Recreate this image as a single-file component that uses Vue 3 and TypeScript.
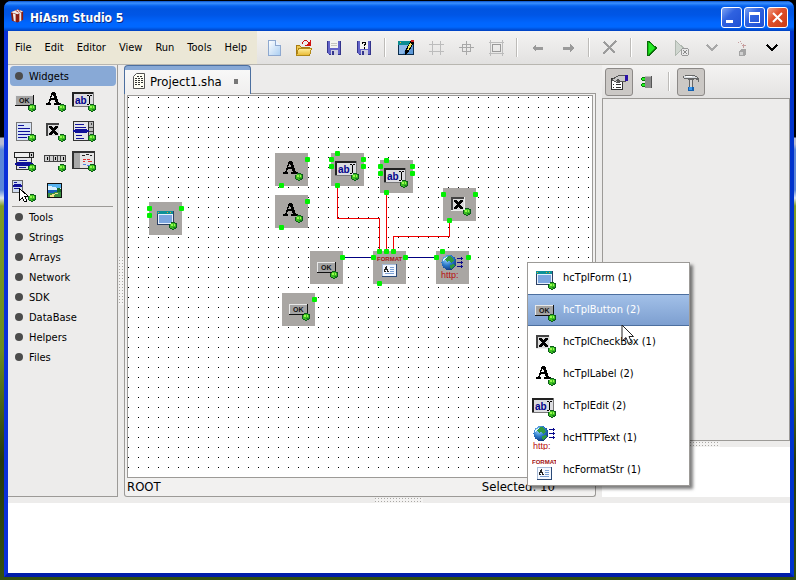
<script setup lang="ts">
type Port = [number, number]
interface FlowNode { id: string; icon: string; x: number; y: number; ports: Port[] }
interface Caption { text: string; x: number; y: number; kind: string }

const menus: string[] = ['File', 'Edit', 'Editor', 'View', 'Run', 'Tools', 'Help']

const toolbar: { icon: string; label: string }[][] = [
  [
    { icon: 't-new', label: 'New' },
    { icon: 't-open', label: 'Open' },
    { icon: 't-save', label: 'Save' },
    { icon: 't-saveas', label: 'Save as' },
  ],
  [
    { icon: 't-form', label: 'Edit form' },
    { icon: 't-grid', label: 'Grid' },
    { icon: 't-center', label: 'Center' },
    { icon: 't-bounds', label: 'Bounds' },
  ],
  [
    { icon: 't-left', label: 'Back' },
    { icon: 't-right', label: 'Forward' },
  ],
  [{ icon: 't-delete', label: 'Delete' }],
  [
    { icon: 't-run', label: 'Run' },
    { icon: 't-debug', label: 'Debug' },
    { icon: 't-chev-off', label: 'Debug options' },
    { icon: 't-build', label: 'Build' },
    { icon: 't-chev', label: 'More' },
  ],
]

const widgets: { icon: string; label: string }[] = [
  { icon: 'w-button', label: 'Button' },
  { icon: 'w-label', label: 'Label' },
  { icon: 'w-edit', label: 'Edit' },
  { icon: 'w-memo', label: 'Memo' },
  { icon: 'w-check', label: 'Check box' },
  { icon: 'w-list', label: 'List box' },
  { icon: 'w-combo', label: 'Combo box' },
  { icon: 'w-track', label: 'Track bar' },
  { icon: 'w-rich', label: 'Text view' },
  { icon: 'w-popup', label: 'Popup menu' },
  { icon: 'w-image', label: 'Image' },
]

// Lettering drawn on top of a 24x24 widget icon
const captions: Record<string, Caption> = {
  'w-button': { text: 'OK', x: 7, y: 15, kind: 'ok' },
  'w-edit': { text: 'ab', x: 3, y: 16, kind: 'ab' },
  'w-http': { text: 'http:', x: 1, y: 23, kind: 'http' },
  'w-format': { text: 'FORMAT', x: 0, y: 6, kind: 'format' },
}

const categories: string[] = ['Tools', 'Strings', 'Arrays', 'Network', 'SDK', 'DataBase', 'Helpers', 'Files']

const nodes: FlowNode[] = [
  { id: 'form', icon: 'w-form', x: 21, y: 106, ports: [[0, 6], [0, 13], [32, 6]] },
  { id: 'label1', icon: 'w-label', x: 147, y: 57, ports: [[32, 6], [6, 32]] },
  { id: 'label2', icon: 'w-label', x: 147, y: 99, ports: [[32, 6], [6, 32]] },
  { id: 'edit1', icon: 'w-edit', x: 203, y: 57, ports: [[6, 0], [0, 6], [0, 13], [32, 6], [32, 13], [6, 32]] },
  { id: 'edit2', icon: 'w-edit', x: 252, y: 64, ports: [[6, 0], [0, 6], [0, 13], [32, 6], [32, 13], [6, 32]] },
  { id: 'check', icon: 'w-check', x: 315, y: 92, ports: [[0, 6], [32, 6], [6, 32]] },
  { id: 'button1', icon: 'w-button', x: 182, y: 155, ports: [[32, 6]] },
  { id: 'button2', icon: 'w-button', x: 154, y: 197, ports: [[32, 6]] },
  { id: 'format', icon: 'w-format', x: 245, y: 155, ports: [[6, 0], [13, 0], [20, 0], [0, 6], [32, 6], [6, 32]] },
  { id: 'http', icon: 'w-http', x: 308, y: 155, ports: [[6, 0], [0, 6], [32, 6]] },
]

const dataWires: string[] = ['M209 90V122H251V153', 'M258 97V153', 'M321 125V140H265V153']
const eventWires: string[] = ['M215 161H244', 'M278 161H307']

const found: { icon: string; name: string; count: number }[] = [
  { icon: 'w-form', name: 'hcTplForm', count: 1 },
  { icon: 'w-button', name: 'hcTplButton', count: 2 },
  { icon: 'w-check', name: 'hcTplCheckBox', count: 1 },
  { icon: 'w-label', name: 'hcTplLabel', count: 2 },
  { icon: 'w-edit', name: 'hcTplEdit', count: 2 },
  { icon: 'w-http', name: 'hcHTTPText', count: 1 },
  { icon: 'w-format', name: 'hcFormatStr', count: 1 },
]
const active = 'hcTplButton'
</script>

<template>
  <div class="desktop">
    <svg class="defs" aria-hidden="true">
      <defs>
        <linearGradient id="g-sheet" x1="0" y1="0" x2="1" y2="1">
          <stop offset="0" stop-color="#fff" /><stop offset="1" stop-color="#a9cdf2" />
        </linearGradient>
        <linearGradient id="g-glass" x1="0" y1="0" x2="1" y2="1">
          <stop offset="0" stop-color="#b4cdf0" /><stop offset="1" stop-color="#5c8cd0" />
        </linearGradient>
        <linearGradient id="g-folder" x1="0" y1="0" x2="0" y2="1">
          <stop offset="0" stop-color="#fff0a0" /><stop offset="1" stop-color="#e8b830" />
        </linearGradient>
        <radialGradient id="g-globe" cx=".35" cy=".3" r=".8">
          <stop offset="0" stop-color="#9fd8ff" /><stop offset=".5" stop-color="#2a78c8" /><stop offset="1" stop-color="#0a2a70" />
        </radialGradient>
        <pattern id="dots" width="10" height="10" patternUnits="userSpaceOnUse">
          <rect x="0" y="1" width="1" height="1" fill="#000" />
        </pattern>
      </defs>

      <symbol id="bullet" viewBox="0 0 8 8">
        <path d="M2 0H6V1H8V6H7V7H5V8H3V7H1V6H0V2H2Z" fill="#0c5a1c" />
        <path d="M2 1H6V2H7V5H5V7H3V6H1V2H2Z" fill="#3cc020" />
        <path d="M2 2H4V4H2ZM5 2H6V4H5Z" fill="#98f850" />
        <path d="M4 5H7V6H4Z" fill="#1c8420" />
      </symbol>

      <symbol id="w-form" viewBox="0 0 24 24">
        <rect x="4" y="5" width="17" height="14" fill="#2b3f63" />
        <rect x="4" y="5" width="16" height="3" fill="#0c9098" />
        <path d="M5 6.500H6M14 6.500H15M17 6.500H18" stroke="#d8b020" />
        <rect x="5" y="8" width="15" height="10" fill="#e8f0fc" />
        <rect x="6" y="9" width="13" height="8" fill="#7ca6e0" />
        <use href="#bullet" x="16" y="16" width="8" height="8" />
      </symbol>
      <symbol id="w-button" viewBox="0 0 24 24">
        <rect x="3" y="7" width="19" height="11" fill="#111" />
        <rect x="3" y="7" width="18" height="10" fill="#e8e8e8" />
        <rect x="4" y="8" width="17" height="9" fill="#a4a4a4" />
        <use href="#bullet" x="16" y="16" width="8" height="8" />
      </symbol>
      <symbol id="w-label" viewBox="0 0 24 24">
        <path d="M10 4H13L17 15H19V17H12V15H14L13 12H9L8 15H9V17H4V15H6ZM9 10H12L11 6Z" fill="#000" fill-rule="evenodd" />
        <use href="#bullet" x="16" y="16" width="8" height="8" />
      </symbol>
      <symbol id="w-edit" viewBox="0 0 24 24">
        <rect x="0" y="4" width="22" height="15" fill="#777" />
        <rect x="0" y="4" width="21" height="14" fill="#222" />
        <rect x="2" y="6" width="19" height="12" fill="#dcdce0" />
        <path d="M15 7.500H17M18 7.500H20M17.500 8V16M15 16.500H17M18 16.500H20" stroke="#000" fill="none" />
        <use href="#bullet" x="16" y="16" width="8" height="8" />
      </symbol>
      <symbol id="w-memo" viewBox="0 0 24 24">
        <rect x="4" y="4" width="16" height="19" fill="#777" />
        <rect x="5" y="5" width="14" height="17" fill="#d8e4f6" />
        <path d="M6 7.500H12M6 10.500H18M6 13.500H18M6 16.500H18M6 19.500H15" stroke="#10109a" />
        <use href="#bullet" x="16" y="16" width="8" height="8" />
      </symbol>
      <symbol id="w-check" viewBox="0 0 24 24">
        <rect x="4" y="5" width="14" height="14" fill="#eee" />
        <rect x="4" y="5" width="13" height="13" fill="#444" />
        <rect x="6" y="7" width="11" height="11" fill="#dcdcdc" />
        <path d="M7 8H10V9H11V10H12V9H13V8H16V10H15V11H14V12H13V13H14V14H15V15H16V17H13V16H12V15H11V16H10V17H7V15H8V14H9V13H10V12H9V11H8V10H7Z" fill="#000" />
        <use href="#bullet" x="16" y="16" width="8" height="8" />
      </symbol>
      <symbol id="w-list" viewBox="0 0 24 24">
        <rect x="1" y="3" width="21" height="20" fill="#333" />
        <rect x="2" y="4" width="14" height="18" fill="#e4e4e8" />
        <rect x="17" y="4" width="4" height="18" fill="#bbb" />
        <path d="M19 5V7M17 9.500H21M17 13.500H21M17 17.500H21" stroke="#444" />
        <path d="M3 6.500H12M3 9.500H14M4 17.500H10M4 20.500H12" stroke="#10109a" />
        <path d="M3 11H15V12H17V14H15V15H3V14H1V12H3Z" fill="#10109a" />
        <use href="#bullet" x="16" y="16" width="8" height="8" />
      </symbol>
      <symbol id="w-combo" viewBox="0 0 24 24">
        <rect x="2" y="4" width="20" height="6" fill="#222" />
        <rect x="3" y="5" width="14" height="4" fill="#eee" />
        <rect x="18" y="5" width="3" height="4" fill="#ccc" />
        <rect x="19" y="6" width="1" height="2" fill="#000" />
        <rect x="4" y="10" width="16" height="12" fill="#333" />
        <rect x="5" y="10" width="14" height="11" fill="#e4e4e8" />
        <path d="M7 12.500H15M7 19.500H14" stroke="#10109a" />
        <path d="M5 14H19V15H21V17H19V18H5V17H3V15H5Z" fill="#10109a" />
        <use href="#bullet" x="16" y="16" width="8" height="8" />
      </symbol>
      <symbol id="w-track" viewBox="0 0 24 24">
        <rect x="2" y="7" width="22" height="7" fill="#444" />
        <path d="M3 8H7V13H3ZM8 8H11V13H8ZM12 8H15V13H12ZM16 8H18V13H16ZM19 8H23V13H19Z" fill="#d0d0d0" />
        <path d="M5 9V12M13.500 9V12M21 9V12" stroke="#000" />
        <use href="#bullet" x="16" y="16" width="8" height="8" />
      </symbol>
      <symbol id="w-rich" viewBox="0 0 24 24">
        <rect x="0" y="3" width="23" height="18" fill="#333" />
        <rect x="2" y="5" width="20" height="15" fill="#e4e4e4" />
        <rect x="2" y="5" width="6" height="15" fill="#a8a8a8" />
        <path d="M10 7.500H13M14 6.500H17M18 7.500H20" stroke="#222" />
        <path d="M11 11.500H14M15 11.500H18M11 13.500H13M16 13.500H20" stroke="#e03030" />
        <path d="M11 16.500H14M15 17.500H18" stroke="#5080e0" />
        <use href="#bullet" x="16" y="16" width="8" height="8" />
      </symbol>
      <symbol id="w-popup" viewBox="0 0 24 24">
        <rect x="0" y="2" width="11" height="13" fill="#666" />
        <rect x="1" y="3" width="9" height="11" fill="#d0dcf0" />
        <path d="M2 4.500H5M2 6.500H9M2 10.500H7" stroke="#10109a" />
        <rect x="1" y="7" width="9" height="2" fill="#10109a" />
        <path d="M7.500 10.500V22.500L10.500 19.500L12.500 24L15 23L13 18.500H16.500Z" fill="#fff" stroke="#000" />
        <use href="#bullet" x="16" y="16" width="8" height="8" />
      </symbol>
      <symbol id="w-image" viewBox="0 0 24 24">
        <rect x="5" y="5" width="15" height="15" fill="#111" />
        <rect x="6" y="6" width="13" height="6" fill="#58b4f0" />
        <path d="M6 8H10V9H14V10H19V12H6Z" fill="#d8f0ff" />
        <path d="M13 12H15V10H18V11H19V14H13Z" fill="#176a28" />
        <rect x="6" y="12" width="9" height="3" fill="#1560b8" />
        <path d="M6 15H12V14H19V19H6Z" fill="#3a9040" />
        <path d="M8 19V17H10V16H13V15H16V16H13V17H12V19Z" fill="#f0e088" />
      </symbol>
      <symbol id="w-http" viewBox="0 0 24 24">
        <circle cx="9" cy="7.500" r="7.500" fill="url(#g-globe)" />
        <path d="M6 2L10 1L13 3L14 6L11 8L9 6L7 7L5 5ZM10 10L13 9L15 10L12 14L10 13Z" fill="#2f9a40" />
        <path d="M4 3L7 2L6 4L3 6Z" fill="#dff4ff" />
        <path d="M17 3.500H23M17 7.500H23M17 11.500H23M21.500 2V5M21.500 6V9M21.500 10V13" stroke="#0a0a8c" fill="none" />
      </symbol>
      <symbol id="w-format" viewBox="0 0 24 24">
        <rect x="5" y="9" width="15" height="13" fill="#2b4a78" />
        <rect x="5" y="9" width="14" height="12" fill="#a8bcd8" />
        <rect x="6" y="10" width="13" height="11" fill="#f4f8ff" />
        <path d="M7 16.500H9M10 16.500H12M7.500 14V16M10.500 14V16M8 14.500H11M8.500 12V14M9.500 11V14" stroke="#222" />
        <path d="M13 12.500H17M13 14.500H17M13 16.500H17M8 18.500H17" stroke="#7aa0d4" />
      </symbol>

      <symbol id="t-new" viewBox="0 0 22 22">
        <path d="M5.500 3.500H12.500L17.500 8.500V18.500H5.500Z" fill="url(#g-sheet)" stroke="#8ea8cf" />
        <path d="M12.500 3.500V8.500H17.500" fill="#eaf3ff" stroke="#8ea8cf" />
      </symbol>
      <symbol id="t-open" viewBox="0 0 22 22">
        <path d="M3.500 17V8.500H6.500L8.500 10.500H16.500V17Z" fill="#f0c850" stroke="#a87a10" />
        <path d="M3.500 18.500L5.500 11.500H18.500L16.500 18.500Z" fill="url(#g-folder)" stroke="#b08818" />
        <path d="M9.500 7V5.500L11.500 3.500H13.500L16.500 6.500" fill="none" stroke="#c80c0c" />
        <path d="M18 3V9H12V8H14V7H15V6H16V5H17V3Z" fill="#d01010" />
      </symbol>
      <symbol id="t-save" viewBox="0 0 22 22">
        <path d="M4 4H18V18H6L4 16Z" fill="#6464c8" />
        <path d="M4.500 4V16M17.500 4V18M6 17.500H18" stroke="#34348c" />
        <rect x="7" y="4" width="8" height="7" fill="#f4f4f0" />
        <path d="M8 6.500H14M8 8.500H14" stroke="#c4c4c0" />
        <rect x="8" y="13" width="7" height="5" fill="#d0d0e0" />
        <rect x="9" y="14" width="2" height="4" fill="#34348c" />
      </symbol>
      <symbol id="t-saveas" viewBox="0 0 22 22">
        <path d="M4 4H18V18H6L4 16Z" fill="#6464c8" />
        <path d="M4.500 4V16M17.500 4V18M6 17.500H18" stroke="#34348c" />
        <rect x="7" y="4" width="8" height="8" fill="#f4f4f0" />
        <path d="M9.500 7V5.500H12.500V7.500H11.500V9M11.500 10V11.500" fill="none" stroke="#000" />
        <rect x="8" y="13" width="7" height="5" fill="#d0d0e0" />
        <rect x="9" y="14" width="2" height="4" fill="#34348c" />
      </symbol>
      <symbol id="t-form" viewBox="0 0 22 22">
        <rect x="3" y="4" width="16" height="14" fill="#0a2c4c" />
        <rect x="3" y="4" width="15" height="4" fill="#0c8c90" />
        <path d="M5 5.500H6" stroke="#f0c020" />
        <rect x="4" y="8" width="14" height="9" fill="#5c98d8" />
        <path d="M4 8H13L8 17H4Z" fill="#8cb8e8" />
        <path d="M16 3H19V6L13 16L10 18V14Z" fill="#000" />
        <path d="M15 6L17 7L13 14L12 13Z" fill="#f8e860" />
        <rect x="16" y="3" width="3" height="2" fill="#d02020" />
      </symbol>
      <symbol id="t-grid" viewBox="0 0 22 22">
        <path d="M7.500 4V18M15.500 4V18M4 7.500H19M4 14.500H19" stroke="#bcbcbc" />
      </symbol>
      <symbol id="t-center" viewBox="0 0 22 22">
        <path d="M11.500 4V18M4 10.500H19M7.500 7.500H15.500V14.500H7.500Z" stroke="#a8a8a8" fill="none" />
      </symbol>
      <symbol id="t-bounds" viewBox="0 0 22 22">
        <path d="M5.500 3V19M17.500 3V19M4 5.500H19M4 16.500H19" stroke="#bcbcbc" />
        <rect x="7.500" y="7.500" width="8" height="7" fill="none" stroke="#999" />
      </symbol>
      <symbol id="t-left" viewBox="0 0 22 22">
        <path d="M5 11L9 7V10H16V13H9V15Z" fill="#9a9a9a" />
      </symbol>
      <symbol id="t-right" viewBox="0 0 22 22">
        <path d="M17 11L13 7V10H6V13H13V15Z" fill="#9a9a9a" />
      </symbol>
      <symbol id="t-delete" viewBox="0 0 22 22">
        <path d="M5 5L16 16M17 4L4 17" stroke="#9c9c9c" stroke-width="2" fill="none" />
      </symbol>
      <symbol id="t-run" viewBox="0 0 22 22">
        <path d="M6.500 4.500L8 4.500L15.500 11L8 18.500H6.500Z" fill="#12c412" stroke="#0a6a0a" />
        <path d="M8 6V16L13 11Z" fill="#28e828" />
      </symbol>
      <symbol id="t-debug" viewBox="0 0 22 22">
        <path d="M4.500 3.500L12.500 11L4.500 18.500Z" fill="#cfd6cf" stroke="#b0b8b0" />
        <circle cx="14" cy="15" r="4" fill="#e8e8e8" stroke="#999" />
        <path d="M12 13L16 17M16 13L12 17" stroke="#888" />
      </symbol>
      <symbol id="t-chev-off" viewBox="0 0 22 22">
        <path d="M6 8L11 13L16 8" fill="none" stroke="#a8a8a8" stroke-width="2" />
      </symbol>
      <symbol id="t-build" viewBox="0 0 22 22">
        <path d="M8 14L10 12H14L15 13V17L13 19H8Z" fill="#a4a4a4" />
        <path d="M9 15H12V18H9Z" fill="#d0d0d0" />
        <path d="M7 5.500H8M9 4.500H10M10 6.500H11M12.500 7V11M11 8.500H15" stroke="#c8a0a0" />
      </symbol>
      <symbol id="t-chev" viewBox="0 0 22 22">
        <path d="M6 8L11 13L16 8" fill="none" stroke="#000" stroke-width="2" />
      </symbol>
      <symbol id="t-props" viewBox="0 0 22 22">
        <rect x="3.500" y="7.500" width="11" height="11" fill="#fff" stroke="#333" />
        <path d="M5 13.500H6M8 13.500H13M5 16.500H6M8 16.500H13" stroke="#333" />
        <path d="M4 9L8 6L12 4H17V10H13L10 12L8 11Z" fill="#c8c8c8" stroke="#555" />
        <path d="M8 10L11 8M9 11L12 9" stroke="#555" />
        <rect x="17" y="4" width="3" height="6" fill="#2a10a8" />
      </symbol>
      <symbol id="t-ports" viewBox="0 0 22 22">
        <rect x="9" y="5" width="7" height="12" fill="#8c8c8c" />
        <path d="M9 5.500H16" stroke="#bbb" /><path d="M15.500 5V17" stroke="#555" />
        <path d="M5 7H6V6H9V10H6V9H5ZM5 13H6V12H9V16H6V15H5Z" fill="#0a7a0a" />
        <path d="M6 7H9V9H6ZM6 13H9V15H6Z" fill="#20f020" />
      </symbol>
      <symbol id="t-hammer" viewBox="0 0 22 22">
        <path d="M3 5H5V4H15V5H17V6H18V7H19V11H18V9H16V8H14V9H8V8H4V7H3Z" fill="#666" />
        <path d="M4 5H15V6H17V7H4Z" fill="#d8dce0" />
        <path d="M6 5H12V6H6Z" fill="#fff" />
        <rect x="9" y="9" width="4" height="7" fill="#666" /><rect x="10" y="9" width="2" height="7" fill="#d8d8d8" />
        <path d="M8 16H14V20H8Z" fill="#1460b0" /><path d="M9 16H12V19H9Z" fill="#3898f0" />
      </symbol>
    </svg>

    <div class="window">
      <header class="titlebar">
        <svg class="logo" viewBox="0 0 16 16" aria-hidden="true">
          <path d="M1 4L8 1L14 3V12L8 15L2 13Z" fill="#8a1c10" />
          <path d="M1 4L8 1L14 3L8 6Z" fill="#f0ece8" />
          <path d="M3 5L6 6V14L4 13ZM10 5L12 4V13L10 14Z" fill="#f0ece8" />
          <path d="M6 2L9 4M9 1L11 4" stroke="#b03020" />
        </svg>
        <h1>HiAsm Studio 5</h1>
        <div class="captions">
          <button class="cap" type="button" aria-label="Minimize">
            <svg viewBox="0 0 19 19"><rect x="4" y="12" width="7" height="3" fill="#fff" /></svg>
          </button>
          <button class="cap" type="button" aria-label="Maximize">
            <svg viewBox="0 0 19 19"><path d="M4 4H15V15H4ZM5 7V14H14V7Z" fill="#fff" fill-rule="evenodd" /></svg>
          </button>
          <button class="cap close" type="button" aria-label="Close">
            <svg viewBox="0 0 19 19"><path d="M5 5L14 14M14 5L5 14" stroke="#fff" stroke-width="2" /></svg>
          </button>
        </div>
      </header>

      <div class="bar">
        <nav class="menu">
          <button v-for="m in menus" :key="m" type="button">{{ m }}</button>
        </nav>
        <div class="tools">
          <div v-for="(group, i) in toolbar" :key="i" class="group">
            <button v-for="t in group" :key="t.icon" type="button" :aria-label="t.label">
              <svg><use :href="'#' + t.icon" /></svg>
            </button>
          </div>
        </div>
      </div>

      <main class="work">
        <aside class="palette">
          <button class="cat head" type="button"><i></i>Widgets</button>
          <div class="widgets">
            <button v-for="w in widgets" :key="w.icon" type="button" :aria-label="w.label">
              <svg viewBox="0 0 24 24">
                <use :href="'#' + w.icon" width="24" height="24" />
                <text
                  v-if="captions[w.icon]"
                  :x="captions[w.icon].x"
                  :y="captions[w.icon].y"
                  :class="['lettering', captions[w.icon].kind]"
                >{{ captions[w.icon].text }}</text>
              </svg>
            </button>
          </div>
          <div class="cats">
            <button v-for="c in categories" :key="c" class="cat" type="button"><i></i>{{ c }}</button>
          </div>
        </aside>

        <div class="grip upright"><span></span></div>

        <section class="document">
          <div class="tabs">
            <button class="tab" type="button">
              <svg viewBox="0 0 14 16" aria-hidden="true">
                <path d="M4.500 .5H12.500V15.500H1.500V3.500Z" fill="#fffff4" stroke="#555" />
                <path d="M5 3.500H11M3 5.500H11M3 7.500H11M3 9.500H11M3 11.500H8M9 13.500H11" stroke="#333" stroke-dasharray="2 1" />
              </svg>
              <span>Project1.sha</span>
              <i></i>
            </button>
            <div class="rest"></div>
          </div>
          <div class="sheet">
            <svg class="canvas">
              <rect width="100%" height="100%" fill="url(#dots)" />
              <g v-for="n in nodes" :key="n.id" :transform="`translate(${n.x} ${n.y})`">
                <rect width="33" height="33" fill="#a9a6a3" />
                <use :href="'#' + n.icon" x="4" y="4" width="24" height="24" />
                <text
                  v-if="captions[n.icon]"
                  :x="captions[n.icon].x + 4"
                  :y="captions[n.icon].y + 4"
                  :class="['lettering', captions[n.icon].kind]"
                >{{ captions[n.icon].text }}</text>
              </g>
              <path v-for="d in eventWires" :key="d" :d="d" class="wire event" />
              <path v-for="d in dataWires" :key="d" :d="d" class="wire data" />
              <g v-for="n in nodes" :key="n.id + '-ports'" :transform="`translate(${n.x} ${n.y})`">
                <rect
                  v-for="(p, i) in n.ports"
                  :key="i"
                  :x="p[0] - 2"
                  :y="p[1] - 2"
                  width="5"
                  height="5"
                  rx="1"
                  fill="#00f000"
                />
              </g>
            </svg>
            <footer class="status"><span>ROOT</span><span>Selected: 10</span></footer>
          </div>
        </section>

        <div class="grip"></div>

        <aside class="inspector">
          <div class="modes">
            <button class="on" type="button" aria-label="Properties"><svg><use href="#t-props" /></svg></button>
            <button type="button" aria-label="Points"><svg><use href="#t-ports" /></svg></button>
            <span class="sep"></span>
            <button class="on" type="button" aria-label="Tools"><svg><use href="#t-hammer" /></svg></button>
          </div>
          <div class="props"></div>
          <div class="grip level"><span></span></div>
          <div class="info"></div>
        </aside>
      </main>

      <div class="grip level"><span></span></div>
      <div class="output"></div>
    </div>

    <div class="popup" role="menu">
      <button
        v-for="f in found"
        :key="f.name"
        type="button"
        role="menuitem"
        :class="{ active: f.name === active }"
      >
        <svg viewBox="0 0 24 24">
          <use :href="'#' + f.icon" width="24" height="24" />
          <text
            v-if="captions[f.icon]"
            :x="captions[f.icon].x"
            :y="captions[f.icon].y"
            :class="['lettering', captions[f.icon].kind]"
          >{{ captions[f.icon].text }}</text>
        </svg>
        <span>{{ f.name }} ({{ f.count }})</span>
      </button>
    </div>
    <svg class="pointer" viewBox="0 0 14 22" aria-hidden="true">
      <path d="M1 1V17L5 13.500L7.500 19.500L10.500 18L8 12.500H12.500Z" fill="#fff" stroke="#222" />
    </svg>
  </div>
</template>

<style>
body {
  margin: 0;
}
</style>

<style scoped>
.desktop {
  position: relative;
  box-sizing: border-box;
  height: 100vh;
  padding: 1px 2px 3px 4px;
  display: flex;
  background: linear-gradient(#000 0 137px, #b9bcd0 138px 144px, #5a86d8 150px 190px, #dfe6ef 198px, #7f9c24 206px, #6c8c20 350px, #25380c 460px, #34500f);
  font-family: "DejaVu Sans Condensed", "DejaVu Sans", sans-serif;
  font-size: 11px;
  color: #000;
}
.defs {
  position: absolute;
  width: 0;
  height: 0;
}
symbol {
  shape-rendering: crispEdges;
}
button {
  margin: 0;
  padding: 0;
  border: 0;
  background: none;
  font: inherit;
  color: inherit;
  text-align: left;
}
svg {
  display: block;
}
.lettering {
  font-family: "Liberation Sans", sans-serif;
  font-weight: 700;
}
.ok {
  font-size: 7px;
  fill: #111;
}
.ab {
  font-size: 10px;
  fill: #00008b;
}
.http {
  font-size: 9px;
  font-weight: 400;
  fill: #b80c0c;
}
.format {
  font-size: 6px;
  fill: #a01010;
}
.window {
  flex: 1;
  min-width: 0;
  display: flex;
  flex-direction: column;
  box-sizing: border-box;
  border: solid #0b3bdc;
  border-width: 0 4px 4px;
  border-color: #0848e0 #0033cc #001ca8 #0a2fd8;
  border-radius: 7px 7px 0 0;
  background: #edeceb;
}
.titlebar {
  flex: none;
  display: flex;
  align-items: center;
  gap: 5px;
  height: 30px;
  margin: 0 -4px;
  padding: 0 6px;
  box-sizing: border-box;
  border-radius: 7px 7px 0 0;
  background: linear-gradient(#0a50c8, #3a90ff 2px, #0662ee 5px, #0054e0 8px, #0056e6 14px, #0066ff 22px, #0068ff 26px, #0040c0 30px);
}
.logo {
  width: 15px;
  height: 16px;
}
h1 {
  flex: 1;
  margin: 0;
  padding-top: 4px;
  font-size: 12px;
  font-weight: 700;
  line-height: 16px;
  color: #fff;
  text-shadow: 1px 1px #0a2a80;
}
.captions {
  display: flex;
  gap: 2px;
  padding-top: 3px;
}
.cap {
  box-sizing: border-box;
  width: 21px;
  height: 21px;
  border: 1px solid #fff;
  border-radius: 3px;
  background: linear-gradient(135deg, #7ea4f4, #2f62e0 40%, #1f50d4);
}
.cap.close {
  background: linear-gradient(135deg, #f0a088, #e0502c 40%, #c83c14);
}
.bar {
  flex: none;
  display: flex;
  height: 33px;
  border-bottom: 1px solid #b8b6b0;
  background: linear-gradient(#f4f3f2, #e2e1e0);
}
.menu {
  display: flex;
  align-items: center;
  gap: 13px;
  padding: 0 10px 0 7px;
  background: #ebe7d6;
}
.menu button {
  line-height: 32px;
}
.tools {
  flex: 1;
  display: flex;
  align-items: center;
  padding-left: 2px;
}
.group {
  display: flex;
  align-items: center;
}
.group + .group::before {
  content: "";
  width: 1px;
  height: 19px;
  margin: 0 5px;
  border-right: 1px solid #fff;
  background: #bdbbb8;
}
.group button {
  width: 30px;
  display: flex;
  justify-content: center;
}
.tools svg,
.modes svg {
  width: 22px;
  height: 22px;
}
.work {
  flex: 1;
  min-height: 0;
  display: flex;
}
.palette {
  box-sizing: border-box;
  width: 110px;
  padding: 1px 1px 0 2px;
  border: solid #9c9a97;
  border-width: 0 1px 1px 0;
}
.cat {
  display: flex;
  align-items: center;
  gap: 6px;
  width: 100%;
  height: 20px;
  padding-left: 5px;
}
.cat i {
  width: 8px;
  height: 8px;
  border-radius: 50%;
  background: #4c4c4c;
}
.head {
  border-radius: 4px;
  background: #88a9d6;
}
.widgets {
  display: grid;
  grid-template-columns: repeat(3, 30px);
  grid-template-rows: repeat(3, 30px) 28px;
  align-items: start;
  padding: 2px 0 0 2px;
}
.widgets svg {
  width: 24px;
  height: 24px;
}
.cats {
  margin: 0 3px 0 2px;
  border-top: 1px solid #9c9a97;
}
.cats .cat {
  padding-left: 3px;
}
.grip {
  flex: none;
  width: 6px;
  display: flex;
  align-items: center;
  justify-content: center;
}
.grip.level {
  width: auto;
  height: 6px;
}
.grip span {
  width: 48px;
  height: 5px;
  background: conic-gradient(from 270deg at 1px 1px, #aaa8a5 90deg, #f4f3f2 0) 0 0 / 3px 3px;
}
.grip.upright span {
  width: 5px;
  height: 48px;
}
.document {
  flex: 1;
  min-width: 0;
  display: flex;
  flex-direction: column;
}
.tabs {
  flex: none;
  display: flex;
  height: 29px;
}
.tab {
  box-sizing: border-box;
  display: flex;
  align-items: center;
  width: 127px;
  padding: 2px 7px 0;
  border: 1px solid #4c6f9f;
  border-width: 1px 1px 0;
  border-radius: 4px 4px 0 0;
  background: linear-gradient(#88a9d6 4px, #f8f8f8 4px, #f0efee);
  font-size: 13px;
}
.tab svg {
  width: 14px;
  height: 16px;
  margin-right: 4px;
}
.tab i {
  width: 4px;
  height: 5px;
  margin-left: 12px;
  background: #777;
}
.rest {
  flex: 1;
  border-bottom: 1px solid #9c9a97;
}
.sheet {
  flex: 1;
  min-height: 0;
  display: flex;
  flex-direction: column;
  padding: 1px 2px 0;
  border: solid #9c9a97;
  border-width: 0 1px 1px;
  border-radius: 0 0 3px 3px;
  background: #f2f1f0;
}
.canvas {
  flex: 1;
  min-height: 0;
  width: 100%;
  box-sizing: border-box;
  border: 1px solid #9c9a97;
  background: #fff;
}
.wire {
  fill: none;
  stroke-width: 1;
  shape-rendering: crispEdges;
}
.data {
  stroke: #f00000;
}
.event {
  stroke: #000080;
}
.status {
  flex: none;
  display: flex;
  justify-content: space-between;
  padding-right: 38px;
  font-size: 13px;
  line-height: 18px;
}
.inspector {
  width: 188px;
  display: flex;
  flex-direction: column;
}
.modes {
  flex: none;
  display: flex;
  align-items: center;
  height: 33px;
  padding-left: 3px;
  background: linear-gradient(#f4f3f2, #e4e3e2);
}
.modes button {
  box-sizing: border-box;
  width: 28px;
  height: 28px;
  padding: 2px;
  border: 1px solid transparent;
  border-radius: 3px;
}
.modes .on {
  border-color: #8c8987;
  background: #cbc8c5;
}
.sep {
  width: 1px;
  height: 19px;
  margin: 0 7px;
  border-right: 1px solid #fff;
  background: #bdbbb8;
}
.props {
  flex: 1;
  border: 1px solid #9c9a97;
}
.info {
  height: 50px;
  background: #fff;
}
.output {
  flex: none;
  height: 70px;
  background: #fff;
}
.popup {
  position: absolute;
  top: 262px;
  left: 527px;
  width: 163px;
  outline: 1px solid #9c9a97;
  outline-offset: -1px;
  background: #fff;
  box-shadow: 3px 3px 3px rgba(0, 0, 0, 0.5);
}
.popup button {
  box-sizing: border-box;
  display: flex;
  align-items: center;
  gap: 7px;
  width: 100%;
  height: 32px;
  padding-left: 5px;
  line-height: 16px;
}
.popup svg {
  width: 24px;
  height: 24px;
}
.popup .active {
  border: solid #4c6f9f;
  border-width: 1px 0;
  background: linear-gradient(#a2c0e8, #7d9fd0);
  color: #fff;
}
.pointer {
  position: absolute;
  top: 324px;
  left: 621px;
  width: 14px;
  height: 22px;
}
</style>
